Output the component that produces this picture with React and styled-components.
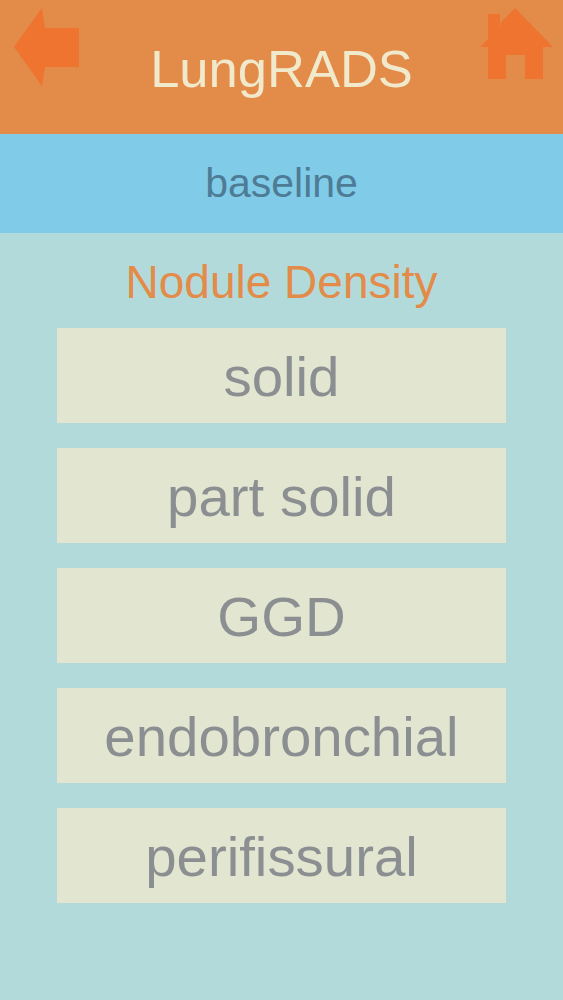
import React from 'react'
import styled, { createGlobalStyle } from 'styled-components'

const GlobalStyle = createGlobalStyle`
  html, body {
    margin: 0;
    padding: 0;
    background: #b3dadb;
  }
  body {
    font-family: "Liberation Sans", Arial, sans-serif;
  }
`

const Page = styled.div`
  width: 563px;
  height: 1000px;
  overflow: hidden;
  background: #b3dadb;
`

const Header = styled.header`
  display: grid;
  grid-template-columns: 90px 1fr 90px;
  height: 134px;
  background: #e38b48;
`

const Title = styled.h1`
  margin: 0;
  padding-top: 39px;
  text-align: center;
  font-size: 52.5px;
  line-height: 60px;
  font-weight: 400;
  color: #f1e9cc;
`

const IconButton = styled.button`
  display: flex;
  align-items: flex-start;
  height: 134px;
  padding: ${({ $right }) => ($right ? '8px 0 0 7px' : '8px 0 0 14px')};
  border: none;
  background: none;
  svg {
    display: block;
    fill: #ee7430;
  }
`

const SubHeader = styled.div`
  height: 99px;
  display: flex;
  align-items: center;
  justify-content: center;
  background: #80cbe8;
  color: #4e7c95;
  font-size: 41px;
`

const Heading = styled.h2`
  margin: 0;
  padding-top: 23px;
  height: 74px;
  box-sizing: border-box;
  text-align: center;
  font-size: 46px;
  line-height: 52px;
  font-weight: 400;
  color: #e38b48;
`

const Options = styled.div`
  display: flex;
  flex-direction: column;
  gap: 25px;
  padding: 21px 57px 0 57px;
`

const Option = styled.button`
  height: 95px;
  width: 449px;
  padding: 2px 0 0;
  border: none;
  background: #e2e5cf;
  color: #8b8f92;
  font-family: inherit;
  font-size: 56.4px;
  line-height: 93px;
  text-align: center;
`

const options = ['solid', 'part solid', 'GGD', 'endobronchial', 'perifissural']

export default function App() {
  return (
    <Page>
      <GlobalStyle />
      <Header>
        <IconButton aria-label="back">
          <svg width="65" height="78" viewBox="0 0 65 78">
            <path d="M0 39 L28 0 L31 20 L65 20 L65 59 L31 59 L28 78 Z" />
          </svg>
        </IconButton>
        <Title>LungRADS</Title>
        <IconButton $right aria-label="home">
          <svg width="73" height="72" viewBox="0 0 73 72">
            <path d="M35 0 L73 39 L63 39 L63 71 L45 71 L45 47 L26 47 L26 71 L8 71 L8 39 L0 39 L8 31 L8 6 L20 6 L20 21 L21 14 Z" />
          </svg>
        </IconButton>
      </Header>
      <SubHeader>baseline</SubHeader>
      <Heading>Nodule Density</Heading>
      <Options>
        {options.map((label) => (
          <Option key={label}>{label}</Option>
        ))}
      </Options>
    </Page>
  )
}
